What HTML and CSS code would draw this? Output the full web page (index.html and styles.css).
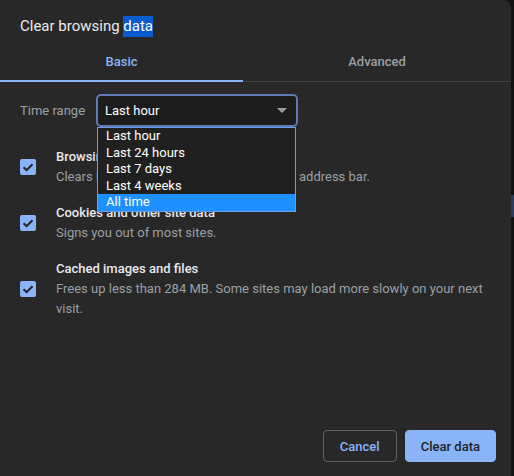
FILE: index.html
```html
<!DOCTYPE html>
<html>
<head>
<meta charset="utf-8">
<link rel="stylesheet" href="styles.css">
</head>
<body>
<div class="page">
  <div class="dialog">
    <div class="title">Clear browsing <span class="sel">data</span></div>
    <div class="tabs">
      <div class="tab tab-active">Basic</div>
      <div class="tab tab-idle">Advanced</div>
    </div>
    <div class="range-row">
      <div class="range-label">Time range</div>
      <div class="select-wrap">
        <div class="select">
          <span>Last hour</span>
          <svg class="arrow" width="10" height="5" viewBox="0 0 10 5"><path d="M0 0 L10 0 L5 5 Z" fill="#9aa0a6"/></svg>
        </div>
        <div class="menu">
          <div class="opt">Last hour</div>
          <div class="opt">Last 24 hours</div>
          <div class="opt">Last 7 days</div>
          <div class="opt">Last 4 weeks</div>
          <div class="opt opt-hl">All time</div>
        </div>
      </div>
    </div>
    <div class="rows">
      <div class="row">
        <div class="cb"><svg width="16" height="16" viewBox="0 0 16 16"><path d="M3.5 8.2 L6.6 11.2 L12.5 5.2" fill="none" stroke="#202124" stroke-width="2"/></svg></div>
        <div class="text">
          <div class="row-title">Browsing history</div>
          <div class="row-sub">Clears history and autocompletions in the address bar.</div>
        </div>
      </div>
      <div class="row">
        <div class="cb"><svg width="16" height="16" viewBox="0 0 16 16"><path d="M3.5 8.2 L6.6 11.2 L12.5 5.2" fill="none" stroke="#202124" stroke-width="2"/></svg></div>
        <div class="text">
          <div class="row-title">Cookies and other site data</div>
          <div class="row-sub">Signs you out of most sites.</div>
        </div>
      </div>
      <div class="row">
        <div class="cb"><svg width="16" height="16" viewBox="0 0 16 16"><path d="M3.5 8.2 L6.6 11.2 L12.5 5.2" fill="none" stroke="#202124" stroke-width="2"/></svg></div>
        <div class="text">
          <div class="row-title">Cached images and files</div>
          <div class="row-sub">Frees up less than 284 MB. Some sites may load more slowly on your next visit.</div>
        </div>
      </div>
    </div>
    <div class="actions">
      <button class="btn btn-cancel">Cancel</button>
      <button class="btn btn-primary">Clear data</button>
    </div>
  </div>
  <div class="backdrop">
    <div class="strip"></div>
  </div>
</div>
</body>
</html>
```
FILE: styles.css
```css
html, body {
  margin: 0;
  padding: 0;
  background: #121212;
}
body {
  font-family: Roboto, "Noto Sans", "Liberation Sans", sans-serif;
  font-size: 13px;
  color: #e8eaed;
}
.page {
  display: flex;
  width: 514px;
  height: 476px;
  overflow: hidden;
}
.dialog {
  width: 511px;
  height: 476px;
  background: #282828;
  border-top-right-radius: 8px;
  display: flex;
  flex-direction: column;
  flex: none;
}
.backdrop {
  flex: 1;
  background: #111111;
  padding-top: 195px;
}
.strip {
  height: 22px;
  background: #2a3c5c;
}
.title {
  padding: 16px 20px 6px;
  font-size: 15px;
  line-height: 20px;
  color: #e8eaed;
}
.sel {
  background: #0b5bd0;
  color: #ffffff;
  padding: 1px 0 2px;
}
.tabs {
  display: flex;
  height: 40px;
}
.tab {
  display: flex;
  align-items: center;
  justify-content: center;
  font-weight: 500;
  font-size: 13px;
  padding-top: 0;
  padding-bottom: 2px;
  box-sizing: border-box;
}
.tab-active {
  width: 243px;
  color: #8ab4f8;
  box-shadow: inset 0 -2px 0 #8ab4f8;
}
.tab-idle {
  flex: 1;
  color: #9aa0a6;
  box-shadow: inset 0 -1px 0 #3a4541;
}
.range-row {
  display: flex;
  align-items: center;
  margin-top: 12px;
  padding-left: 20px;
}
.range-label {
  width: 76px;
  color: #9aa0a6;
}
.select-wrap {
  position: relative;
}
.select {
  box-sizing: border-box;
  width: 202px;
  height: 33px;
  border: 2px solid #5d7ab5;
  border-radius: 5px;
  background: #1c1c1c;
  display: flex;
  align-items: center;
  justify-content: space-between;
  padding: 0 9px 0 7px;
  color: #ffffff;
}
.arrow {
  display: block;
}
.menu {
  position: absolute;
  left: 1px;
  top: 33px;
  width: 197px;
  border: 1px solid #6f9ee6;
  background: #202020;
  z-index: 2;
}
.opt {
  height: 16.6px;
  line-height: 16.6px;
  padding-left: 8px;
  color: #ffffff;
}
.opt-hl {
  background: #1e90ff;
}
.rows {
  margin-top: 12px;
  display: flex;
  flex-direction: column;
}
.row {
  display: flex;
  align-items: center;
  padding: 8px 20px;
}
.cb {
  width: 16px;
  height: 16px;
  border-radius: 2px;
  background: #8ab4f8;
  flex: none;
  margin-right: 20px;
}
.cb svg {
  display: block;
}
.text {
  flex: 1;
}
.row-title {
  font-weight: 500;
  line-height: 20px;
  color: #e8eaed;
}
.row-sub {
  line-height: 20px;
  color: #9aa0a6;
}
.actions {
  margin-top: auto;
  display: flex;
  justify-content: flex-end;
  gap: 8px;
  padding: 0 15px 14px;
}
.btn {
  font-family: Roboto, "Noto Sans", "Liberation Sans", sans-serif;
  font-size: 13px;
  font-weight: 500;
  height: 32px;
  padding: 0 15px;
  border-radius: 4px;
  cursor: pointer;
}
.btn-cancel {
  width: 74px;
  padding: 0;
  background: transparent;
  border: 1px solid #5f6368;
  color: #8ab4f8;
}
.btn-primary {
  background: #8ab4f8;
  border: 1px solid #8ab4f8;
  color: #202124;
}
```
